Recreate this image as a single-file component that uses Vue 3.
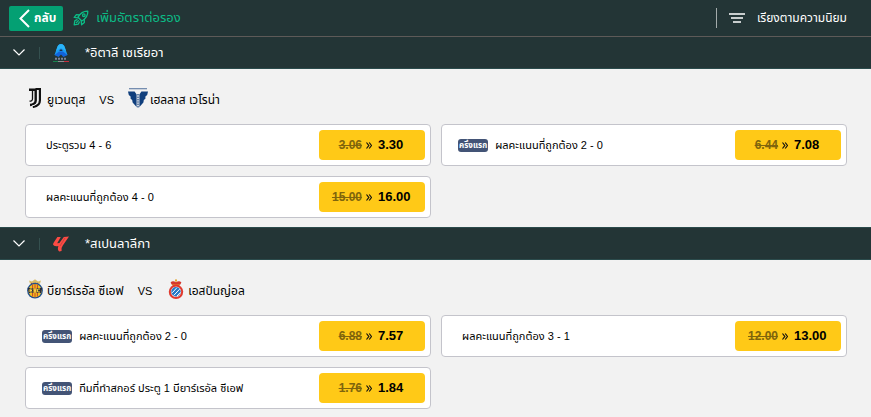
<template>
  <div class="page">
    <header class="top_bar">
      <button class="back_btn" type="button">
        <svg width="11" height="19" viewBox="0 0 11 19" aria-hidden="true">
          <path d="M10 1 L1.5 9.5 L10 18" fill="none" stroke="#fff" stroke-width="2" />
        </svg>
        กลับ
      </button>
      <svg class="rocket" width="16" height="16" viewBox="0 0 16 16" aria-hidden="true">
        <g fill="none" stroke="#0cbc86" stroke-width="1.3" stroke-linejoin="round" stroke-linecap="round">
          <path d="M14.8 1.2 C10.5 1 7.5 3 5 7.2 L8.8 11 C13 8.5 15 5.5 14.8 1.2 Z" />
          <path d="M6.6 4.8 L3.4 4.6 L1.2 7.4 L5 7.8 M11.2 9.4 L11.4 12.6 L8.6 14.8 L8.2 11" />
          <circle cx="10.8" cy="5.2" r="1.3" />
          <path d="M4 9.6 L1.8 10.8 L1.2 14.8 L5.2 14.2 L6.4 12 M3.4 12.6 L5.4 10.6" />
        </g>
      </svg>
      <h1 class="title">เพิ่มอัตราต่อรอง</h1>
      <button class="sort_btn" type="button">
        <svg width="16" height="10" viewBox="0 0 16 10" aria-hidden="true">
          <path d="M0 1 H16 M2 5 H14 M4 9 H12" stroke="#fff" stroke-width="1.6" />
        </svg>
        เรียงตามความนิยม
      </button>
    </header>

    <section v-for="league in leagues" :key="league.name">
      <div class="league_bar">
        <button class="fold_btn" type="button" :aria-label="league.name">
          <svg width="12" height="7" viewBox="0 0 12 7" aria-hidden="true">
            <path d="M0.5 0.5 L6 6 L11.5 0.5" fill="none" stroke="#fff" stroke-width="1.2" />
          </svg>
        </button>
        <svg v-if="league.logo === 'seriea'" class="league_logo" width="18" height="20" viewBox="0 0 18 20" aria-hidden="true">
          <path d="M9 1 C11 1 12 2 13 5 L15.5 12 L12.5 12.5 L11 11 H7 L5.5 12.5 L2.5 12 L5 5 C6 2 7 1 9 1 Z" fill="#1a9bf3" />
          <path d="M9 1 C11 1 12 2 13 5 L14 8 L9 5 L4 8 L5 5 C6 2 7 1 9 1 Z" fill="#29b4f8" />
          <path d="M2.5 12 L7 8.5 H11 L15.5 12 L11.5 14 L9 11.5 L6.5 14 Z" fill="#1263db" />
          <path d="M8 6.5 H10 L10.6 8 H7.4 Z" fill="#16334d" />
          <path d="M3 15.8 H15" stroke="#7c8398" stroke-width="2" stroke-dasharray="2 1" />
          <path d="M1 18.5 H6" stroke="#16834d" />
          <path d="M6 18.5 H12" stroke="#8b8d8f" />
          <path d="M12 18.5 H17" stroke="#c52c3b" />
        </svg>
        <svg v-else class="league_logo" width="18" height="18" viewBox="0 0 18 18" aria-hidden="true">
          <g fill="#fc4b44">
            <path d="M5.4 2 L8.8 2 L5.2 8.2 L7.4 8 L11.8 2 L17 1.6 L10.8 10.4 Q8.8 13 9.6 16 L7.2 16.4 Q5 14.6 6.4 11 Q2 12 1 9.6 Q1 8.4 2.4 6.4 Z" />
          </g>
          <path d="M13 3 L8 11" stroke="#b53c3a" stroke-width="0.7" />
        </svg>
        <h2 class="league_name">{{ league.name }}</h2>
      </div>

      <div class="league_body">
        <div class="match">
          <span class="team" v-for="(team, index) in league.teams" :key="team.name">
            <span class="versus" v-if="index === 1">VS</span>
            <svg v-if="team.crest === 'juventus'" class="crest" width="20" height="20" viewBox="0 0 20 20" aria-hidden="true">
              <path d="M4 1.8 H10.7 V12.5 C10.7 15 8.5 16.8 5 17" fill="none" stroke="#111" stroke-width="2.4" />
              <path d="M10.5 0.9 H14.9 V12.5 C14.9 16 12 18.4 7.8 19" fill="none" stroke="#111" stroke-width="2.2" />
              <path d="M4.5 13.2 C7 13.2 7.5 12 7.5 10.5 V3" fill="none" stroke="#111" stroke-width="1.3" />
              <path d="M12.7 2 V12.5 C12.7 15.4 10.6 17.2 6.8 18" fill="none" stroke="#f2f2f2" stroke-width="1" />
            </svg>
            <svg v-else-if="team.crest === 'verona'" class="crest" width="20" height="20" viewBox="0 0 20 20" aria-hidden="true">
              <path d="M1 0.7 H19" stroke="#6883a9" stroke-width="1.2" />
              <path d="M0 3.4 H6.6 L8.6 6.4 V19 L4.6 14.6 L4.2 12 L2.6 10.8 L2.6 8.4 L0.8 7 Z" fill="#103f7d" />
              <path d="M20 3.4 H13.4 L11.4 6.4 V19 L15.4 14.6 L15.8 12 L17.4 10.8 L17.4 8.4 L19.2 7 Z" fill="#103f7d" />
              <path d="M10 6 V20" stroke="#6883a9" stroke-width="2.4" stroke-dasharray="1.6 0.8" />
            </svg>
            <svg v-else-if="team.crest === 'villarreal'" class="crest" width="20" height="20" viewBox="0 0 20 20" aria-hidden="true">
              <path d="M5 4.8 L4 1.6 L7 2.6 L10 0.3 L13 2.6 L16 1.6 L15 4.8 Z" fill="#d9bd69" />
              <path d="M6 4.4 H14" stroke="#b33435" stroke-width="1" stroke-dasharray="1 1" />
              <circle cx="10" cy="11.6" r="7.9" fill="#22508c" />
              <circle cx="10" cy="11.6" r="6.6" fill="#f2c21c" />
              <path d="M7.6 5.6 V17.6 M10 5 V18.4 M12.4 5.6 V17.6" stroke="#c9402d" stroke-width="1" />
              <path d="M2.8 9 H8.4 V14 H4 Z M17.2 9 H11.6 V14 H16 Z" fill="#2a2b3c" />
              <path d="M7.4 10 H5 V13 H7.4 M5 11.5 H7 M15 10 H12.6 V13 H15 M9 9.5 L10 13.5 L11 9.5" fill="none" stroke="#f7d243" stroke-width="1" />
            </svg>
            <svg v-else class="crest" width="20" height="20" viewBox="0 0 20 20" aria-hidden="true">
              <path d="M6 6 L4.6 3.4 C6 1.8 8 2 10 3.2 C12 2 14 1.8 15.4 3.4 L14 6 Z" fill="#d6382b" />
              <path d="M6 6 H14 M10 0.3 V3 M9 1.3 H11" stroke="#e4a62e" stroke-width="1.2" />
              <circle cx="10" cy="12.8" r="7.2" fill="#e0392d" />
              <circle cx="10" cy="12.8" r="5.2" fill="#f3d9d8" />
              <circle cx="10" cy="12.8" r="4.7" fill="#2478c6" />
              <path d="M6.2 13.8 L11 8.6 M7.8 16.4 L13.6 10.2 M11 17 L14.4 13.4" stroke="#fff" stroke-width="1" />
            </svg>
            <span class="team_name">{{ team.name }}</span>
          </span>
        </div>

        <ul class="bet_list">
          <li class="bet" v-for="bet in league.bets" :key="bet.name">
            <span class="tag" v-if="bet.firstHalf">ครึ่งแรก</span>
            <span class="bet_name">{{ bet.name }}</span>
            <button class="odds" type="button">
              <s class="old">{{ bet.old }}</s>
              <svg width="6" height="7" viewBox="0 0 6 7" aria-hidden="true">
                <path d="M0.5 0.5 L2.8 3.5 L0.5 6.5 M3.2 0.5 L5.5 3.5 L3.2 6.5" fill="none" stroke="#111" stroke-width="1.2" />
              </svg>
              <strong class="now">{{ bet.now }}</strong>
            </button>
          </li>
        </ul>
      </div>
    </section>
  </div>
</template>

<script setup>
import { ref } from 'vue';

const leagues = ref([
  {
    name: '*อิตาลี เซเรียอา',
    logo: 'seriea',
    teams: [
      { name: 'ยูเวนตุส', crest: 'juventus' },
      { name: 'เฮลลาส เวโรน่า', crest: 'verona' },
    ],
    bets: [
      { name: 'ประตูรวม 4 - 6', old: '3.06', now: '3.30' },
      { name: 'ผลคะแนนที่ถูกต้อง 2 - 0', old: '6.44', now: '7.08', firstHalf: true },
      { name: 'ผลคะแนนที่ถูกต้อง 4 - 0', old: '15.00', now: '16.00' },
    ],
  },
  {
    name: '*สเปนลาลีกา',
    logo: 'laliga',
    teams: [
      { name: 'บียาร์เรอัล ซีเอฟ', crest: 'villarreal' },
      { name: 'เอสปันญ่อล', crest: 'espanyol' },
    ],
    bets: [
      { name: 'ผลคะแนนที่ถูกต้อง 2 - 0', old: '6.88', now: '7.57', firstHalf: true },
      { name: 'ผลคะแนนที่ถูกต้อง 3 - 1', old: '12.00', now: '13.00' },
      { name: 'ทีมที่ทำสกอร์ ประตู 1 บียาร์เรอัล ซีเอฟ', old: '1.76', now: '1.84', firstHalf: true },
    ],
  },
])
</script>

<style>
body {
  background: #f2f2f2;
}
</style>

<style scoped>
.page {
  font-family: "Liberation Sans", "Noto Sans Thai", "Noto Sans", sans-serif;
  font-size: 12px;
  line-height: 16px;
  color: #000;
}

button {
  border: none;
  padding: 0;
  background: none;
  font: inherit;
  color: inherit;
  cursor: pointer;
}

svg {
  flex: none;
}

.top_bar {
  display: flex;
  align-items: center;
  height: 36px;
  padding: 0 24px 0 9px;
  background: #233536;
  color: #fff;
}

.back_btn {
  display: flex;
  align-items: center;
  gap: 4px;
  height: 25px;
  padding: 0 7px 0 10px;
  border-radius: 2px;
  background: #04a073;
  font-weight: bold;
}

.rocket {
  margin-left: 10px;
}

.title {
  margin: 0 0 0 7px;
  font-size: 13px;
  font-weight: normal;
  color: #0cbc86;
}

.sort_btn {
  display: flex;
  align-items: center;
  gap: 12px;
  height: 20px;
  margin-left: auto;
  padding-left: 12px;
  border-left: 1px solid #a3abab;
}

.league_bar {
  display: flex;
  align-items: center;
  box-sizing: border-box;
  height: 33px;
  padding-left: 13px;
  border-top: 1px solid #2b4b4c;
  border-bottom: 1px solid #2b4b4c;
  background: #233536;
  color: #fff;
}

.top_bar + section .league_bar {
  border-top-color: #5d5a58;
}

.fold_btn {
  display: flex;
  align-items: center;
  height: 12px;
  padding-right: 14px;
  border-right: 1px solid #34504f;
}

.league_logo {
  margin-left: 12px;
}

.league_name {
  margin: 0 0 0 15px;
  font-size: 13px;
  font-weight: normal;
}

.league_body {
  padding: 16px 24px 9px 25px;
}

.match {
  display: flex;
  align-items: center;
  height: 26px;
  margin-bottom: 13px;
}

.team {
  display: flex;
  align-items: center;
}

.versus {
  margin: 0 14px;
  font-size: 11px;
}

.versus,
.team_name {
  padding-top: 4px;
}

.crest {
  margin-right: 2px;
}

.bet_list {
  display: grid;
  grid-template-columns: 1fr 1fr;
  gap: 10px;
  margin: 0;
  padding: 0;
  list-style: none;
}

.bet {
  display: flex;
  align-items: center;
  box-sizing: border-box;
  height: 42px;
  padding: 5px 5px 5px 16px;
  border: 1px solid #c4c4cb;
  border-radius: 4px;
  background: #fff;
  font-size: 11px;
}

.tag {
  padding: 0 1px;
  border-radius: 3px;
  background: #435476;
  font-size: 8px;
  font-weight: bold;
  line-height: 13px;
  color: #fff;
}

.bet_name {
  margin-left: 4px;
}

.tag + .bet_name {
  margin-left: 7px;
}

.odds {
  display: grid;
  grid-template-columns: 43px 6px 1fr;
  column-gap: 4px;
  align-items: center;
  width: 106px;
  height: 30px;
  margin-left: auto;
  border-radius: 4px;
  background: #ffc917;
}

.old {
  font-size: 12px;
  font-weight: bold;
  text-align: right;
  color: #80650c;
}

.now {
  padding-left: 2px;
  font-size: 13px;
  text-align: left;
}
</style>
